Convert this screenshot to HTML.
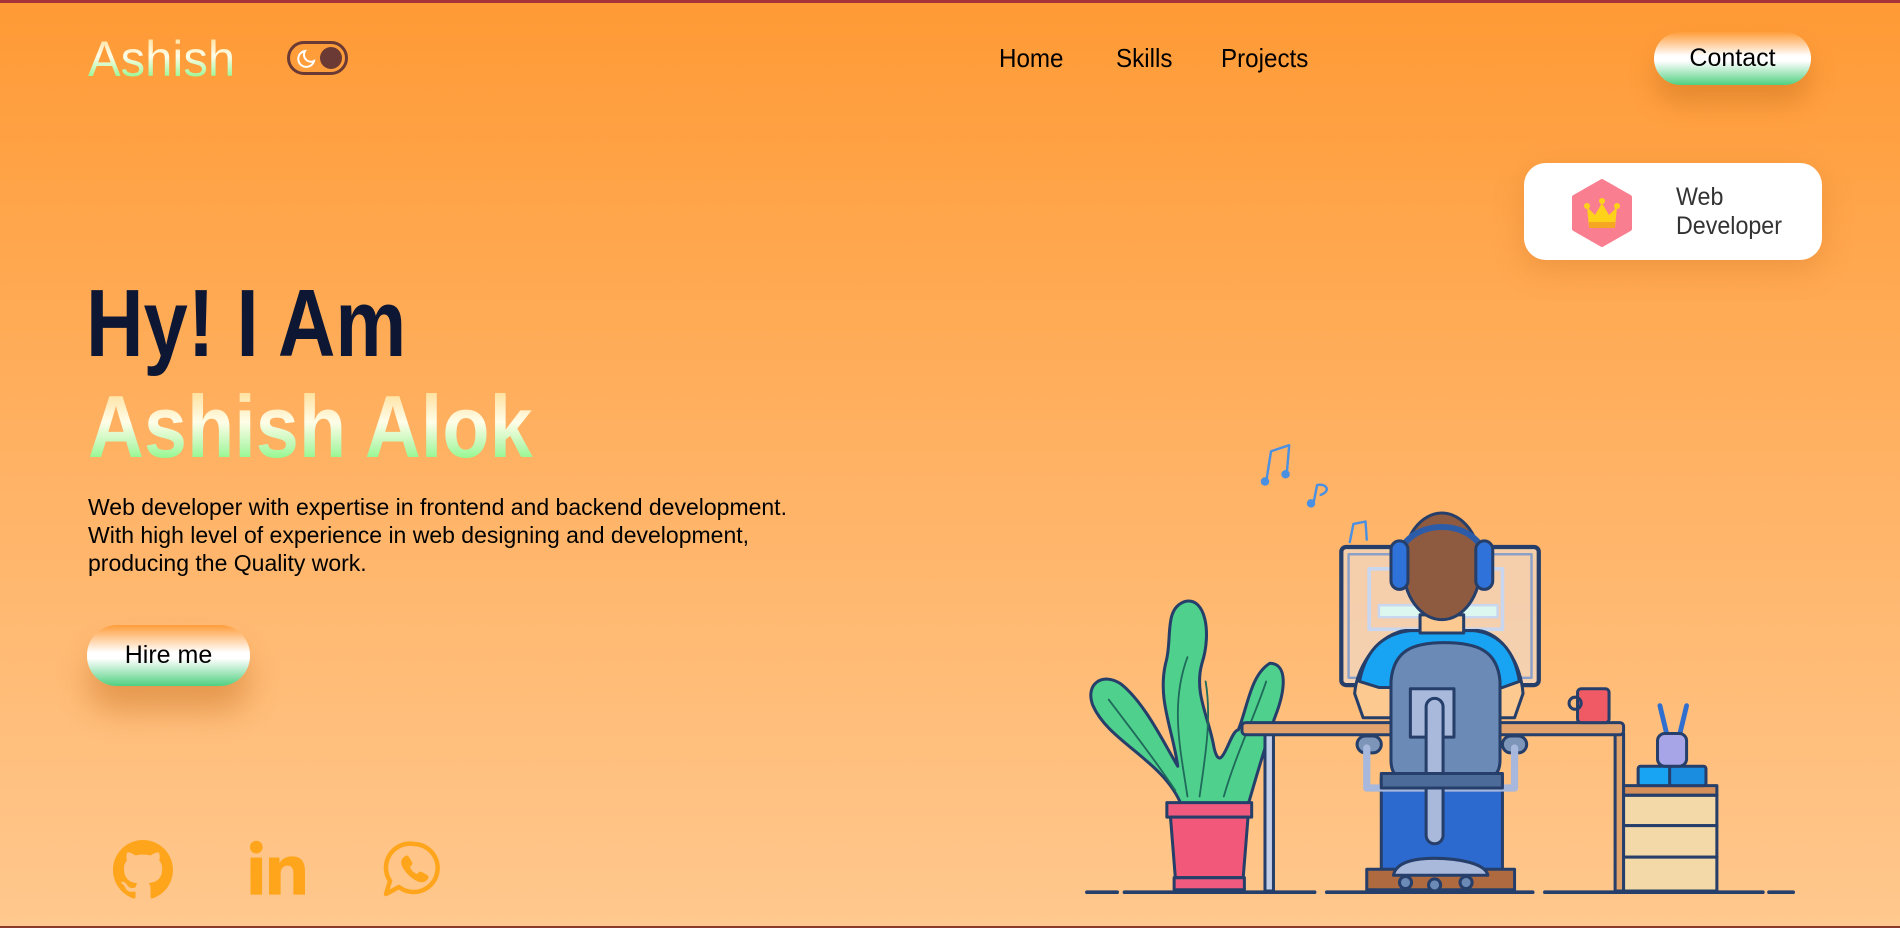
<!DOCTYPE html>
<html><head><meta charset="utf-8"><style>
*{margin:0;padding:0;box-sizing:border-box}
html,body{width:1900px;height:928px;overflow:hidden}
body{position:relative;background:linear-gradient(180deg,#ff9a35 0%,#ffb264 50%,#ffc88e 100%);font-family:"Liberation Sans",sans-serif;border-top:3px solid #a8323a;border-bottom:2px solid #8a3a2a}
.grad{background:linear-gradient(180deg,#ffd27a 0%,#fffde8 45%,#b8f8b0 70%,#5cf55a 100%);-webkit-background-clip:text;background-clip:text;color:transparent}
.logo{position:absolute;left:88px;top:26px;font-size:50px;line-height:60px;transform:scaleX(.98);transform-origin:left}
.toggle{position:absolute;left:287px;top:38px;width:61px;height:34px;border:3px solid #6b3a34;border-radius:17px}
.toggle .k{position:absolute;right:3px;top:3px;width:22px;height:22px;border-radius:50%;background:#6b3a34}
.nav{position:absolute;top:40px;color:#000;font-size:26px;transform:scaleX(.93);transform-origin:left}
.btn{position:absolute;border-radius:30px;background:linear-gradient(180deg,#ff9d3a 0%,#ffffff 45%,#ffffff 55%,#4fcf80 100%);box-shadow:0 18px 25px rgba(200,110,30,.45);display:flex;align-items:center;justify-content:center;font-size:25px;color:#000}
.badge{position:absolute;left:1524px;top:160px;width:298px;height:97px;background:#fff;border-radius:22px;box-shadow:0 10px 30px rgba(200,110,30,.3)}
.badge .t{position:absolute;left:152px;top:20px;line-height:29px;color:#333;font-size:25px;transform:scaleX(.93);transform-origin:left}
h1{position:absolute;left:86px;top:266px;font-weight:bold;font-size:96px;line-height:110px;color:#0d1733;transform:scaleX(.83);transform-origin:left;white-space:nowrap}
h2{position:absolute;left:88px;top:374px;font-weight:bold;font-size:88px;line-height:100px;transform:scaleX(.88);transform-origin:left;white-space:nowrap}
p{position:absolute;left:88px;top:490px;width:900px;font-size:23px;line-height:28px;color:#000}
</style></head><body>
<div class="logo grad">Ashish</div>
<div class="toggle"><svg width="26" height="26" viewBox="0 0 26 26" style="position:absolute;left:3px;top:1px"><path d="M12 6a8 8 0 1 0 9 10a7 7 0 0 1-9-10z" fill="none" stroke="#fff" stroke-width="2"/></svg><div class="k"></div></div>
<div class="nav" style="left:999px">Home</div>
<div class="nav" style="left:1116px">Skills</div>
<div class="nav" style="left:1221px">Projects</div>
<div class="btn" style="left:1654px;top:29px;width:157px;height:53px">Contact</div>
<div class="badge">
<svg width="64" height="68" viewBox="0 0 64 68" style="position:absolute;left:46px;top:16px"><polygon points="32,2 60,18 60,50 32,66 4,50 4,18" fill="#f97f90" stroke="#f97f90" stroke-width="4" stroke-linejoin="round"/><path d="M19 48 L17 28 L25 36 L32 24 L39 36 L47 28 L45 48 Z" fill="#ffd21a"/><circle cx="17" cy="27" r="3" fill="#ffd21a"/><circle cx="32" cy="22" r="3" fill="#ffd21a"/><circle cx="47" cy="27" r="3" fill="#ffd21a"/><rect x="19" y="43" width="26" height="6" fill="#f5a623"/></svg>
<div class="t">Web<br>Developer</div></div>
<h1>Hy! I Am</h1>
<h2 class="grad">Ashish Alok</h2>
<p>Web developer with expertise in frontend and backend development.<br>With high level of experience in web designing and development,<br>producing the Quality work.</p>
<div class="btn" style="left:87px;top:622px;width:163px;height:61px;box-shadow:0 25px 30px rgba(200,110,30,.45)">Hire me</div>
<svg width="60" height="60" viewBox="0 0 16 16" style="position:absolute;left:113px;top:837px"><path fill="#ffa51c" d="M8 0C3.58 0 0 3.58 0 8c0 3.54 2.29 6.530 5.47 7.590.4.07.55-.17.55-.38 0-.19-.01-.82-.01-1.49-2.01.37-2.53-.49-2.69-.94-.09-.23-.48-.94-.82-1.130-.28-.15-.68-.52-.01-.53.63-.01 1.08.58 1.230.82.72 1.21 1.87.87 2.33.66.07-.52.28-.87.51-1.07-1.78-.2-3.64-.89-3.640-3.95 0-.87.31-1.59.82-2.15-.08-.2-.36-1.02.08-2.12 0 0 .67-.21 2.2.82.64-.18 1.32-.27 2-.27.68 0 1.36.09 2 .27 1.53-1.04 2.2-.82 2.2-.82.44 1.1.16 1.92.08 2.12.51.56.82 1.27.82 2.15 0 3.07-1.87 3.75-3.65 3.95.29.25.54.73.54 1.48 0 1.07-.01 1.93-.01 2.2 0 .21.15.46.55.38A8.013 8.013 0 0016 8c0-4.420-3.58-8-8-8z"/></svg>
<svg width="58" height="58" viewBox="0 0 50 50" style="position:absolute;left:247px;top:836px"><circle cx="8" cy="7" r="5.5" fill="#ffa51c"/><rect x="3" y="16" width="10" height="32" fill="#ffa51c"/><path d="M19 16h9v5c2-4 6-6 11-6 8 0 11 5 11 13v20H40V30c0-4-1-7-5-7s-6 3-6 7v18H19z" fill="#ffa51c"/></svg>
<svg width="60" height="60" viewBox="0 0 60 60" style="position:absolute;left:382px;top:836px"><path d="M32 5a24 24 0 1 1-15 43L4 55l4-13A24 24 0 0 1 32 5z" fill="none" stroke="#ffa51c" stroke-width="4.5" stroke-linejoin="round"/><path d="M22 18c2-2 4-2 5 0l3 5c1 2 0 3-2 5 1 3 4 6 7 7 2-2 3-3 5-2l5 3c2 1 2 3 0 5-3 3-7 3-12 0-5-3-9-7-12-12-3-5-2-9 1-11z" fill="#ffa51c"/></svg>
<svg width="1900" height="928" viewBox="0 0 1568 766" style="position:absolute;left:0;top:0">
<g stroke="#263f6a" stroke-width="2.5" stroke-linejoin="round" stroke-linecap="round">
<g fill="none" stroke="#4a90e2" stroke-width="2"><path d="M1045 395 L1049 370 L1064 365 L1062 388"/><circle cx="1044" cy="395" r="2.5" fill="#4a90e2"/><circle cx="1061" cy="389" r="2.5" fill="#4a90e2"/><path d="M1084 413 L1087 398 C1093 396 1100 402 1090 406"/><circle cx="1082" cy="413" r="2.5" fill="#4a90e2"/><path d="M1114 445 L1117 430 L1127 428 L1128 443"/></g>
<rect x="1107" y="449" width="163" height="114" rx="4" fill="#e8ecf6" fill-opacity=".45" stroke-width="3.5"/>
<rect x="1113" y="455" width="151" height="102" fill="none" stroke="#8aa0c8" stroke-width="2"/>
<rect x="1130" y="467" width="110" height="50" fill="none" stroke="#c8d6f0" stroke-width="3"/>
<rect x="1138" y="497" width="98" height="10" fill="#dcf6f0" stroke="#c8d6f0" stroke-width="2"/>
<path d="M975 662 C960 625 915 610 902 580 C895 562 910 552 925 562 C945 578 960 610 972 630 C968 600 955 575 962 545 C968 525 960 500 978 494 C995 490 1000 520 992 545 C985 570 998 590 1002 615 C1008 640 1015 600 1022 600 C1030 580 1032 555 1048 545 C1062 545 1062 565 1052 590 C1042 620 1035 645 1030 662 Z" fill="#4fd18d"/>
<path d="M980 655 C975 620 965 580 980 540 M990 655 C995 620 1000 590 995 560 M1010 655 C1020 620 1035 590 1045 560 M970 650 C950 620 930 595 915 575" fill="none" stroke="#1f6a5a" stroke-width="1.5"/>
<path d="M963 660 H1033 V672 H963 Z" fill="#f05a7e"/>
<path d="M966 672 H1030 L1026 722 H970 Z" fill="#f2587a"/>
<path d="M969 722 H1027 V732 H969 Z" fill="#f05a7e"/>
<rect x="1044" y="603" width="7" height="130" fill="#c5d0e8"/>
<rect x="1333" y="603" width="7" height="130" fill="#e0a36a"/>
<rect x="1025" y="594" width="315" height="10" rx="3" fill="#e3a36f"/>
<path d="M1125 590 L1118 570 C1120 545 1140 520 1160 518 H1220 C1240 520 1255 545 1257 570 L1250 590 Z" fill="#fcc990"/>
<path d="M1122 560 C1128 530 1145 520 1165 518 H1215 C1238 520 1250 535 1254 560 L1240 565 L1138 565 Z" fill="#18a4f2"/>
<path d="M1172 520 V505 H1208 V520 Z" fill="#fcc990"/>
<ellipse cx="1190" cy="465" rx="32" ry="44" fill="#8e5a40"/>
<path d="M1152 470 C1150 420 1230 420 1228 470" fill="none" stroke="#2c5ca8" stroke-width="5"/>
<rect x="1148" y="444" width="14" height="40" rx="7" fill="#2f72d9"/>
<rect x="1218" y="444" width="14" height="40" rx="7" fill="#2f72d9"/>
<path d="M1140 640 H1240 V728 H1140 Z" fill="#2d6ad0"/>
<path d="M1128 715 H1250 V732 H1128 Z" fill="#b06a40"/>
<rect x="1120" y="605" width="20" height="14" rx="7" fill="#7d95b8"/>
<rect x="1240" y="605" width="20" height="14" rx="7" fill="#7d95b8"/>
<path d="M1128 615 V648 H1250 V615" fill="none" stroke="#a8b8dc" stroke-width="6"/>
<path d="M1148 560 C1150 535 1165 528 1192 528 C1220 528 1236 535 1238 560 V625 C1238 638 1230 642 1220 642 H1166 C1155 642 1148 638 1148 625 Z" fill="#6b8ab5"/>
<rect x="1164" y="566" width="36" height="40" fill="#a9b9dc"/>
<rect x="1177" y="574" width="14" height="120" rx="7" fill="#a9b9dc"/>
<rect x="1140" y="636" width="100" height="12" fill="#4d6b98"/>
<path d="M1150 720 C1152 710 1165 706 1184 706 C1203 706 1226 710 1228 720 Z" fill="#a9b9dc"/>
<circle cx="1160" cy="726" r="5" fill="#6b8ab5"/><circle cx="1184" cy="728" r="5" fill="#6b8ab5"/><circle cx="1210" cy="726" r="5" fill="#6b8ab5"/>
<rect x="1302" y="566" width="26" height="28" rx="3" fill="#f05a64"/>
<circle cx="1300" cy="578" r="5" fill="none"/>
<rect x="1340" y="646" width="77" height="8" fill="#d58f5a"/>
<rect x="1340" y="654" width="77" height="25" fill="#f4d9a8"/>
<rect x="1340" y="679" width="77" height="26" fill="#f4d9a8"/>
<rect x="1340" y="705" width="77" height="28" fill="#f4d9a8"/>
<rect x="1352" y="630" width="30" height="16" rx="2" fill="#18a4f2"/>
<rect x="1378" y="630" width="30" height="16" rx="2" fill="#1b8de0"/>
<path d="M1370 580 L1376 605 M1392 580 L1386 605" stroke="#2f6fd0" stroke-width="4"/>
<rect x="1368" y="603" width="24" height="27" rx="6" fill="#a8a4e8"/>
<path d="M897 734 H922 M928 734 H1085 M1095 734 H1265 M1275 734 H1455 M1460 734 H1480" stroke-width="3"/>
</g>
</svg>
</body></html>
